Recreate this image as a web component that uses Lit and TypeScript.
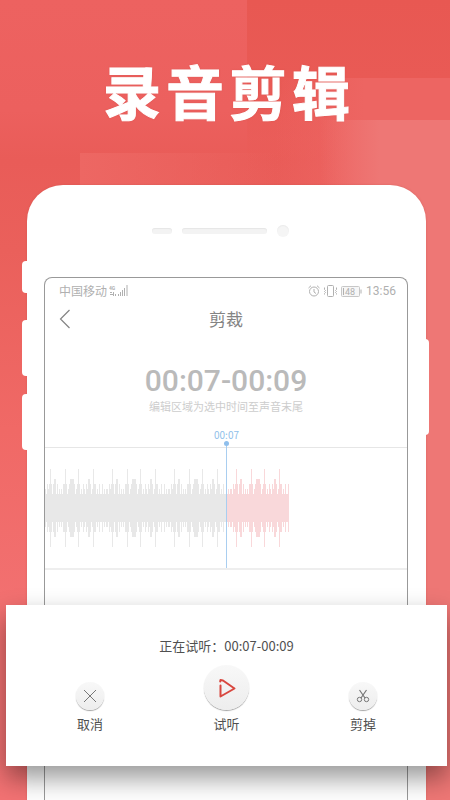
import { LitElement, html, svg, css } from "lit";
import { customElement } from "lit/decorators.js";

// Half heights of one wave period, one value per bar.
const HEIGHTS = [14, 19, 24, 39, 29];
const PERIOD = [
  1, 0, 2, 1, 2, 3, 2, 0, 2, 4, 4, 0, 2, 0, 1, 0, 1, 0, 2, 2, 3, 2, 0, 1, 2, 4, 4, 4, 4, 2, 0, 1,
  2, 3, 2, 0, 1, 0, 2, 1, 0, 2, 1, 4, 4, 2, 0, 1, 3, 2, 2, 0, 1, 0, 2, 0, 0, 2, 0, 1, 0, 1,
];
const BARS = 244;
const CUT = 182;

function wave(from: number, to: number) {
  let d = "";
  for (let i = from; i < to; i++) {
    const h = HEIGHTS[PERIOD[i % PERIOD.length]];
    d += `M${i} ${60 - h}h1v${h * 2}h-1z`;
  }
  return d;
}

@customElement("wave-form")
export class WaveForm extends LitElement {
  static styles = css`
    :host {
      display: block;
      border-top: 1px solid #e6e6e6;
      border-bottom: 2px solid #eeeeee;
    }
    .track {
      display: flex;
      position: relative;
      height: 120px;
    }
    .wave {
      display: block;
      width: 244px;
      height: 120px;
    }
    .played {
      fill: #e8e8e8;
    }
    .selected {
      fill: #f9d8da;
    }
    .marker {
      position: absolute;
      left: 181px;
      top: -6px;
      bottom: 0;
      width: 1px;
      background: #a9cef0;
    }
    .marker::before {
      content: "";
      position: absolute;
      left: -2px;
      top: -1px;
      width: 5px;
      height: 5px;
      border-radius: 50%;
      background: #8fbfec;
    }
    .stamp {
      position: absolute;
      left: 50%;
      bottom: 100%;
      transform: translateX(-50%);
      font-size: 10px;
      line-height: 14px;
      color: #90bfea;
    }
  `;

  render() {
    return html`
      <div class="track">
        <svg class="wave" viewBox="0 0 244 120" shape-rendering="crispEdges" aria-hidden="true">
          ${svg`<path class="played" d=${wave(0, CUT)} /><path class="selected" d=${wave(CUT, BARS)} />`}
        </svg>
        <div class="marker"><span class="stamp">00:07</span></div>
      </div>
    `;
  }
}

@customElement("app-root")
export class AppRoot extends LitElement {
  static styles = css`
    :host {
      display: flex;
      flex-direction: column;
      position: relative;
      box-sizing: border-box;
      min-height: 100vh;
      overflow: hidden;
      font-family: "Noto Sans CJK SC", sans-serif;
      background:
        linear-gradient(90deg, #ee777500, #ee7775 60px) 320px 120px / 100% 100% no-repeat,
        linear-gradient(90deg, #ed6763, #ed676300 200px) 80px 153px / 240px 100% no-repeat,
        linear-gradient(90deg, #ed656200, #ed6562 90px) 275px 78px / 100% 100% no-repeat,
        linear-gradient(#e85852, #e95a55 78px, #eb5f5b00 170px) 247px 0 / 100% 180px no-repeat,
        linear-gradient(#ed6260, #ec605e 110px, #e95c58 160px, #ea605b 250px, #f06966 430px, #f27070 600px, #f27273);
    }
    .title {
      margin: 54px 0 0;
      padding-left: 8px;
      text-align: center;
      font-size: 58px;
      line-height: 72px;
      font-weight: 700;
      letter-spacing: 5px;
      color: #fff;
      -webkit-text-stroke: 1px #fff;
      text-shadow: 0 0 2px #b8403c80;
    }
    .phone {
      position: relative;
      flex: 1;
      display: flex;
      flex-direction: column;
      margin: 59px 24px 0 27px;
      padding: 40px 18px 0 17px;
      border-radius: 36px 36px 0 0;
      background: #fff;
      box-shadow: 0 0 2px #c8504a80;
    }
    .key {
      position: absolute;
      left: -5px;
      width: 8px;
      height: 56px;
      border-radius: 4px 0 0 4px;
      background: #fff;
    }
    .mute {
      top: 76px;
      height: 32px;
    }
    .up {
      top: 135px;
    }
    .down {
      top: 209px;
    }
    .power {
      left: auto;
      right: -3px;
      top: 154px;
      height: 96px;
      border-radius: 0 4px 4px 0;
    }
    .speaker {
      display: flex;
      align-items: center;
      justify-content: center;
      gap: 10px;
      padding-right: 12px;
      height: 12px;
    }
    .slot {
      width: 20px;
      height: 6px;
      border-radius: 3px;
      background: #f3f3f3;
      box-shadow: inset 0 1px 1px #e6e6e6;
    }
    .long {
      width: 85px;
    }
    .lens {
      width: 12px;
      height: 12px;
      border-radius: 50%;
      background: #f5f5f5;
      box-shadow: inset 0 1px 1px #ebebeb;
    }
    .screen {
      flex: 1;
      margin-top: 40px;
      border: 1px solid #999;
      border-bottom: 0;
      border-radius: 8px 8px 0 0;
      overflow: hidden;
    }
    .status {
      display: flex;
      align-items: center;
      gap: 3px;
      height: 26px;
      padding: 0 11px 0 14px;
      font-size: 12px;
      color: #b0b0b0;
    }
    .carrier {
      display: flex;
      align-items: center;
      gap: 2px;
      margin-right: auto;
      line-height: 16px;
    }
    .clock {
      margin-left: 1px;
      font-family: Roboto, sans-serif;
      font-size: 12px;
      line-height: 16px;
    }
    .icon {
      display: block;
      fill: none;
      stroke: currentColor;
    }
    .micro {
      fill: currentColor;
      stroke: none;
      font: 700 5px Roboto, sans-serif;
    }
    .level {
      fill: currentColor;
      stroke: none;
      font: 400 9px Roboto, sans-serif;
    }
    .nav {
      display: grid;
      grid-template-columns: 1fr auto 1fr;
      align-items: center;
      height: 30px;
      padding: 0 14px;
      color: #848484;
    }
    button {
      padding: 0;
      border: 0;
      background: none;
      color: inherit;
      font: inherit;
      cursor: pointer;
    }
    .back {
      justify-self: start;
    }
    .heading {
      margin: 0;
      font-size: 17px;
      line-height: 24px;
      font-weight: 400;
    }
    .range {
      margin-top: 30px;
      text-align: center;
      font: 500 30px/34px Roboto, sans-serif;
      color: #bababa;
    }
    .hint {
      margin: 0 0 33px;
      text-align: center;
      font-size: 11px;
      line-height: 16px;
      color: #cdcdcd;
    }
    .panel {
      position: absolute;
      left: 6px;
      right: 3px;
      bottom: 34px;
      box-sizing: border-box;
      padding: 31px 62px 32px;
      background: #fff;
      box-shadow: 0 12px 24px #00000068;
      color: #505050;
      font-size: 13px;
      line-height: 20px;
    }
    .now {
      margin: 0 0 9px;
      text-align: center;
    }
    .actions {
      display: flex;
      align-items: flex-end;
      justify-content: space-between;
    }
    .action {
      display: flex;
      flex-direction: column;
      align-items: center;
      gap: 4px;
      width: 44px;
    }
    .disc {
      display: grid;
      place-items: center;
      width: 28px;
      height: 28px;
      border-radius: 50%;
      background: linear-gradient(#f8f8f8, #ededed);
      box-shadow: 0 1px 1px #a4a4a4;
      color: #777;
    }
    .main {
      width: 45px;
      height: 45px;
      color: #d8473f;
    }
  `;

  render() {
    return html`
      <h1 class="title">录音剪辑</h1>
      <main class="phone">
        <span class="key mute"></span>
        <span class="key up"></span>
        <span class="key down"></span>
        <span class="key power"></span>
        <div class="speaker">
          <span class="slot"></span><span class="slot long"></span><span class="lens"></span>
        </div>
        <section class="screen">
          <div class="status">
            <span class="carrier">
              中国移动
              <svg class="icon" width="20" height="12" viewBox="0 0 20 12" aria-hidden="true">
                <text class="micro" x="0" y="5">4G</text>
                <path d="M1 7.5h2M1 9.5h3M4.5 7v4M6.5 9v2" />
                <path d="M9.5 9v2M11.5 7v4M13.5 5v6M15.5 3v8M18 0v11" />
              </svg>
            </span>
            <svg class="icon" width="12" height="12" viewBox="0 0 12 12" aria-hidden="true">
              <circle cx="6" cy="6.5" r="4.5" />
              <path d="M6 4v3l2 1.5M.5 3L3 .7M11.5 3L9 .7" />
            </svg>
            <svg class="icon" width="15" height="12" viewBox="0 0 15 12" aria-hidden="true">
              <rect x="4.5" y=".5" width="6" height="11" rx="1" />
              <path d="M1.500 2.500v2l1 1-1 1 1 1-1 1v1M13.500 2.500v2l-1 1 1 1-1 1 1 1v1" />
            </svg>
            <svg class="icon" width="21" height="11" viewBox="0 0 21 11" aria-hidden="true">
              <rect x=".5" y=".5" width="18" height="10" rx="1" fill="#f2f2f2" opacity=".7" />
              <path d="M2.5 2v7M20 3.5v4" />
              <text class="level" x="4" y="9">48</text>
            </svg>
            <span class="clock">13:56</span>
          </div>
          <header class="nav">
            <button class="back" aria-label="返回">
              <svg class="icon" width="12" height="20" viewBox="0 0 12 20" aria-hidden="true">
                <path d="M10.5 1L1.5 10l9 9" stroke-width="1.2" />
              </svg>
            </button>
            <h2 class="heading">剪裁</h2>
          </header>
          <div class="range">00:07-00:09</div>
          <p class="hint">编辑区域为选中时间至声音末尾</p>
          <wave-form></wave-form>
        </section>
      </main>
      <section class="panel">
        <p class="now">正在试听：00:07-00:09</p>
        <div class="actions">
          <button class="action">
            <span class="disc">
              <svg class="icon" width="14" height="14" viewBox="0 0 14 14" aria-hidden="true">
                <path d="M1 1l12 12M13 1L1 13" />
              </svg>
            </span>
            取消
          </button>
          <button class="action">
            <span class="disc main">
              <svg class="icon" width="20" height="22" viewBox="0 0 20 22" aria-hidden="true">
                <path
                  d="M3.500 8.500V19.500L17.500 11.500L6 3.500L3.500 3L3.200 4.500"
                  stroke-width="2"
                  stroke-linecap="round"
                  stroke-linejoin="round"
                />
              </svg>
            </span>
            试听
          </button>
          <button class="action">
            <span class="disc">
              <svg class="icon" width="14" height="14" viewBox="0 0 14 14" aria-hidden="true">
                <path d="M3.5 1l5.5 8M10.5 1L5 9" stroke-width="1.2" />
                <circle cx="3.500" cy="10.500" r="2.2" />
                <circle cx="10.500" cy="10.500" r="2.2" />
              </svg>
            </span>
            剪掉
          </button>
        </div>
      </section>
    `;
  }
}
